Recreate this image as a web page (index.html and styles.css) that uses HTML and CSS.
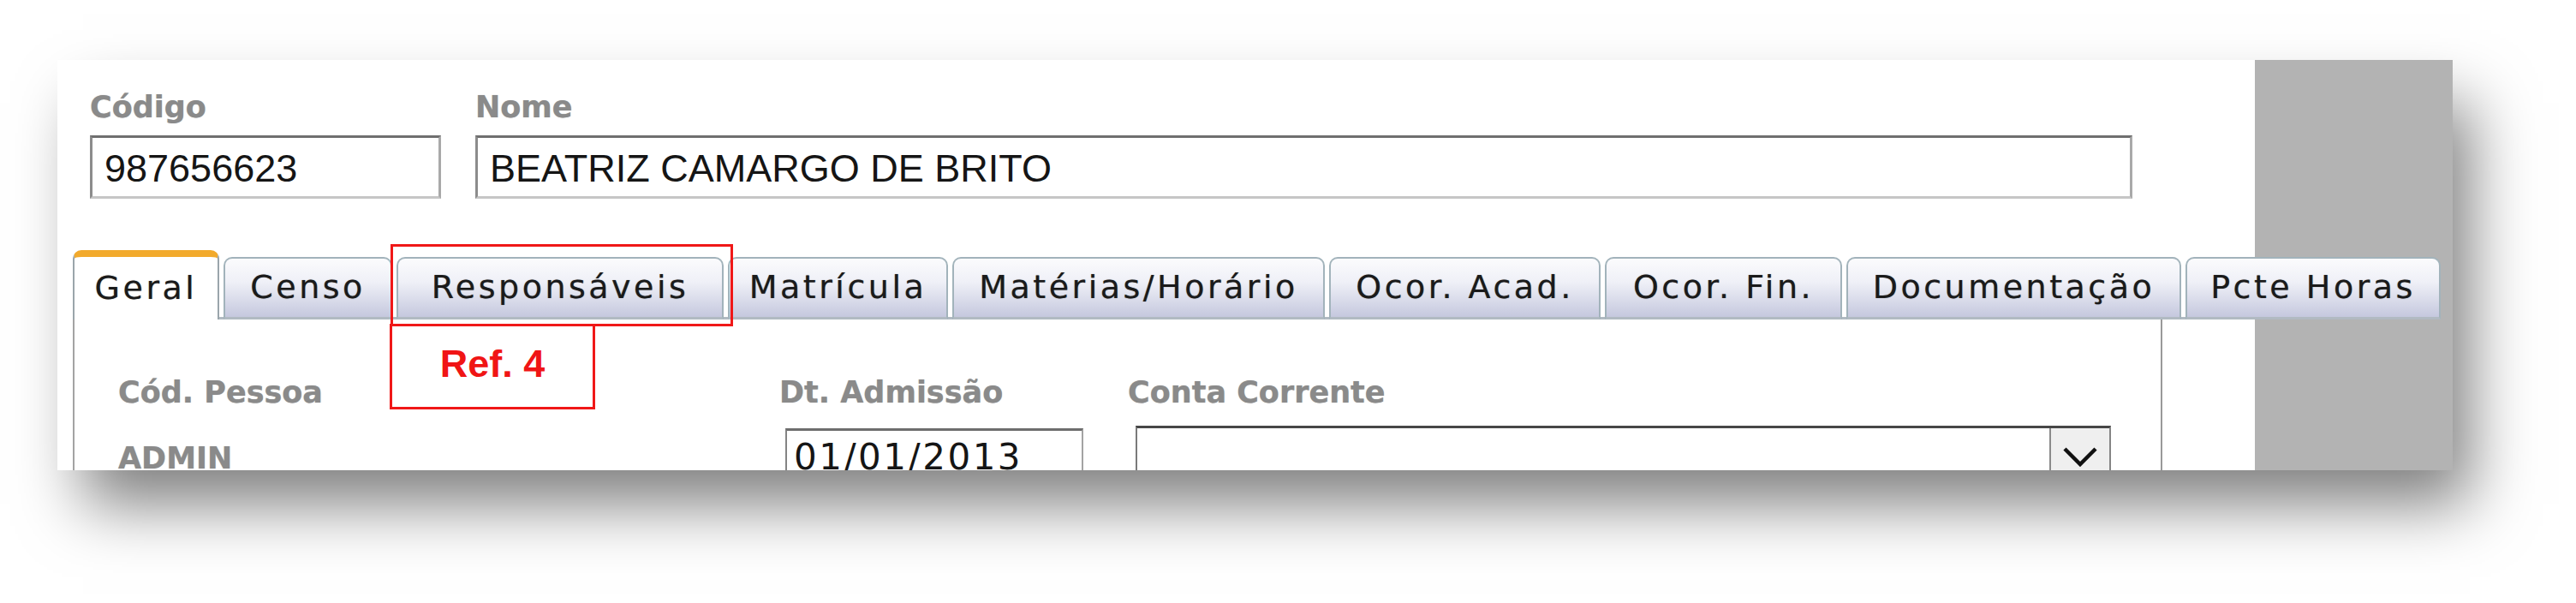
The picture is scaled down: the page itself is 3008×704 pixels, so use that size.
FILE: index.html
```html
<!DOCTYPE html>
<html lang="pt-BR">
<head>
<meta charset="utf-8">
<title>Cadastro de Aluno</title>
<link rel="stylesheet" href="styles.css">
</head>
<body>
<div class="stage">
  <div class="card">
    <div class="fields">
      <div class="field">
        <div class="label">Código</div>
        <div class="input input-codigo">987656623</div>
      </div>
      <div class="field">
        <div class="label">Nome</div>
        <div class="input input-nome">BEATRIZ CAMARGO DE BRITO</div>
      </div>
    </div>
    <div class="tabs">
      <div class="tab active t-geral">Geral</div>
      <div class="tab t-censo">Censo</div>
      <div class="tab t-resp">Responsáveis</div>
      <div class="tab t-matr">Matrícula</div>
      <div class="tab t-mat">Matérias/Horário</div>
      <div class="tab t-oacad">Ocor. Acad.</div>
      <div class="tab t-ofin">Ocor. Fin.</div>
      <div class="tab t-doc">Documentação</div>
      <div class="tab t-pcte">Pcte Horas</div>
    </div>
    <div class="panel">
      <div class="panel-grid">
        <div class="col">
          <div class="label">Cód. Pessoa</div>
          <div class="value">ADMIN</div>
        </div>
        <div class="col">
          <div class="label">Dt. Admissão</div>
          <div class="date">01/01/2013</div>
        </div>
        <div class="col">
          <div class="label">Conta Corrente</div>
          <div class="select">
            <span class="select-value"></span>
            <span class="select-btn">
              <svg class="chevron" width="44" height="24" viewBox="0 0 44 24"><polyline points="4,3 22,21 40,3" fill="none" stroke="#111" stroke-width="4.5"/></svg>
            </span>
          </div>
        </div>
      </div>
    </div>
  </div>
  <div class="callout callout-tab"></div>
  <div class="callout callout-ref">Ref. 4</div>
</div>
</body>
</html>
```

FILE: styles.css
```css
html, body {
  margin: 0;
  padding: 0;
  background: #ffffff;
}

.stage {
  position: relative;
  width: 3008px;
  height: 704px;
  overflow: hidden;
  padding: 70px 0 0 67px;
  box-sizing: border-box;
}

.card {
  width: 2797px;
  height: 479px;
  box-sizing: border-box;
  padding: 34px 0 0 18px;
  overflow: hidden;
  background: linear-gradient(to right, #ffffff 2566px, #b3b3b3 2566px);
  box-shadow: 25px 45px 70px -5px rgba(0, 0, 0, 0.5);
}

.label {
  font-family: "DejaVu Sans", Verdana, sans-serif;
  font-weight: bold;
  font-size: 35px;
  line-height: 42px;
  color: #8a8a8a;
  text-shadow: 0 0 1px rgba(120, 120, 120, 0.6);
  white-space: nowrap;
}

.fields {
  display: flex;
  gap: 40px;
  margin-left: 20px;
}

.input {
  margin-top: 12px;
  height: 74px;
  box-sizing: border-box;
  border-style: solid;
  border-width: 3px;
  border-color: #6f6f6f #a9a9a9 #c6c6c6 #8c8c8c;
  padding: 10px 0 0 14px;
  font-family: "Liberation Sans", Arial, sans-serif;
  font-size: 45px;
  line-height: 51px;
  color: #151515;
  background: #ffffff;
  white-space: nowrap;
}

.input-codigo { width: 410px; }
.input-nome { width: 1935px; }

.tabs {
  display: flex;
  align-items: flex-end;
  gap: 5px;
  width: max-content;
  margin-top: 60px;
  background: linear-gradient(#b1bac2, #b1bac2) left bottom / 100% 3px no-repeat;
}

.tab {
  height: 73px;
  box-sizing: border-box;
  border: 2px solid #a2b3bb;
  border-bottom: 3px solid #b1bac2;
  border-radius: 10px 10px 0 0;
  background: linear-gradient(to bottom, #fbfbfd 0%, #eff0f7 40%, #c5c8de 100%);
  font-family: "DejaVu Sans", Verdana, sans-serif;
  font-size: 38px;
  line-height: 66px;
  letter-spacing: 3.5px;
  color: #1a1a1a;
  text-shadow: 0 0 1px rgba(0, 0, 0, 0.5);
  text-align: center;
  white-space: nowrap;
}

.tab.active {
  height: 81px;
  border-top: 8px solid #f2aa2c;
  border-left: 2px solid #9aa5ab;
  border-right: 2px solid #9aa5ab;
  border-bottom: none;
  background: #ffffff;
  line-height: 72px;
  position: relative;
}

.t-geral { width: 171px; }
.t-censo { width: 197px; }
.t-resp { width: 382px; }
.t-matr { width: 257px; }
.t-mat { width: 435px; }
.t-oacad { width: 317px; }
.t-ofin { width: 277px; }
.t-doc { width: 391px; }
.t-pcte { width: 298px; }

.panel {
  width: 2440px;
  height: 200px;
  box-sizing: border-box;
  border-left: 2px solid #a3a3a3;
  border-right: 2px solid #9a9a9a;
  padding: 64px 0 0 51px;
  background: #ffffff;
}

.panel-grid {
  display: grid;
  grid-template-columns: 772px 407px auto;
}

.col {
  display: flex;
  flex-direction: column;
  align-items: flex-start;
}

.value {
  margin-top: 35px;
  font-family: "DejaVu Sans", Verdana, sans-serif;
  font-weight: bold;
  font-size: 35px;
  line-height: 42px;
  color: #8a8a8a;
  text-shadow: 0 0 1px rgba(120, 120, 120, 0.6);
}

.date {
  margin: 21px 0 0 7px;
  width: 348px;
  height: 74px;
  box-sizing: border-box;
  border-style: solid;
  border-width: 3px 2px 2px 2px;
  border-color: #6d6d6d #a3a3a3 #c6c6c6 #848484;
  padding: 6px 0 0 8px;
  font-family: "DejaVu Sans", Verdana, sans-serif;
  font-size: 42px;
  line-height: 49px;
  letter-spacing: 2.5px;
  color: #151515;
}

.select {
  margin: 18px 0 0 9px;
  width: 1139px;
  height: 74px;
  box-sizing: border-box;
  display: flex;
  border-style: solid;
  border-width: 3px 2px 2px 2px;
  border-color: #474747 #858585 #c6c6c6 #7a7a7a;
  background: #ffffff;
}

.select-value { flex: 1; }

.select-btn {
  width: 70px;
  box-sizing: border-box;
  border-left: 2px solid #8a8a8a;
  background: #efefef;
  display: flex;
  justify-content: center;
  align-items: flex-start;
  padding-top: 21px;
}

.chevron { display: block; }

.callout {
  position: absolute;
  box-sizing: border-box;
  border: 3px solid #f01818;
}

.callout-tab {
  left: 456px;
  top: 285px;
  width: 400px;
  height: 96px;
}

.callout-ref {
  left: 455px;
  top: 378px;
  width: 240px;
  height: 100px;
  display: flex;
  align-items: center;
  justify-content: center;
  padding-bottom: 6px;
  font-family: "Liberation Sans", Arial, sans-serif;
  font-weight: bold;
  font-size: 45px;
  color: #f01515;
  background: #ffffff;
}
```
